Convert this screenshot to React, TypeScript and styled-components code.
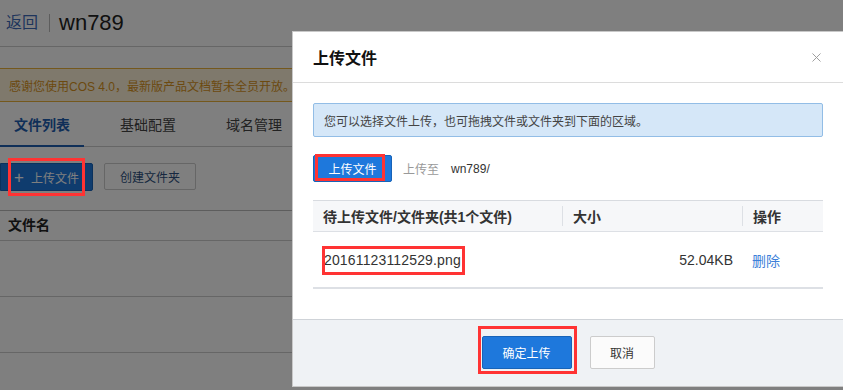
import styled, { createGlobalStyle } from 'styled-components';
import { X } from 'lucide-react';

const GlobalStyle = createGlobalStyle`
  html, body {
    margin: 0;
    padding: 0;
    background: #fff;
    overflow: hidden;
  }
  body {
    font-family: "Liberation Sans", "Noto Sans CJK SC", sans-serif;
    color: #333;
  }
`;

const Page = styled.div`
  width: 843px;
  height: 390px;
  background: #fff;
`;

const Header = styled.div`
  display: flex;
  align-items: center;
  height: 46px;
  padding-left: 6px;
  border-bottom: 1px solid #ccc;
`;

const BackLink = styled.a`
  font-size: 16px;
  color: #3d6ab8;
  line-height: 20px;
`;

const Divider = styled.span`
  width: 1px;
  height: 18px;
  background: #bbb;
  margin: 0 9px 0 11px;
`;

const PageTitle = styled.h1`
  margin: 0;
  font-size: 22px;
  font-weight: 400;
  color: #222;
  line-height: 26px;
`;

const Notice = styled.div`
  margin-top: 21px;
  height: 32px;
  display: flex;
  align-items: center;
  padding-left: 9px;
  font-size: 12px;
  color: #d8931e;
  background: #fff3d8;
  border-top: 1px solid #e8b03a;
  border-bottom: 1px solid #e8b03a;
`;

const Tabs = styled.div`
  display: flex;
  height: 44px;
  border-bottom: 1px solid #ccc;
`;

const Tab = styled.div<{ $active?: boolean }>`
  padding: 0 14px;
  margin-right: 22px;
  display: flex;
  align-items: center;
  font-size: 14px;
  font-weight: ${(p) => (p.$active ? 700 : 400)};
  color: ${(p) => (p.$active ? '#1f5fb0' : '#444')};
  border-bottom: 2px solid ${(p) => (p.$active ? '#1f5fb0' : 'transparent')};
  margin-bottom: -1px;
`;

const Toolbar = styled.div`
  display: flex;
  gap: 11px;
  margin-top: 16px;
`;

const Marked = styled.div`
  position: relative;
  display: inline-flex;
`;

const RedBox = styled.span<{ $t: number; $r: number; $b: number; $l: number }>`
  position: absolute;
  top: ${(p) => p.$t}px;
  right: ${(p) => p.$r}px;
  bottom: ${(p) => p.$b}px;
  left: ${(p) => p.$l}px;
  border: 3px solid #ff3333;
  z-index: 30;
  pointer-events: none;
`;

const PrimaryButton = styled.button`
  display: flex;
  align-items: center;
  justify-content: center;
  gap: 4px;
  height: 28px;
  padding: 0 14px;
  white-space: nowrap;
  font-family: inherit;
  font-size: 12px;
  color: #fff;
  background: #1e78dc;
  border: 1px solid #1763b8;
  border-radius: 2px;
`;

const PageUploadButton = styled(PrimaryButton)`
  width: 93px;
  padding: 0 0 0 13px;
  gap: 7px;
  justify-content: flex-start;
  border-radius: 0 2px 2px 0;
`;

const PlusMark = styled.span`
  font-size: 17px;
  font-weight: 300;
  line-height: 1;
`;

const GhostButton = styled.button`
  height: 27px;
  width: 92px;
  font-family: inherit;
  font-size: 12px;
  color: #2c4f80;
  background: #fff;
  border: 1px solid #ccc;
  border-radius: 2px;
`;

const FileTable = styled.div`
  margin-top: 19px;
  border-top: 1px solid #bbb;
`;

const FileHead = styled.div`
  height: 30px;
  display: flex;
  align-items: center;
  padding: 0 0 3px 8px;
  box-sizing: border-box;
  font-size: 14px;
  font-weight: 700;
  color: #222;
  border-bottom: 1px solid #ccc;
`;

const FileRow = styled.div`
  height: 55px;
  border-bottom: 1px solid #ccc;
`;

const Overlay = styled.div`
  position: fixed;
  inset: 0;
  background: rgba(0, 0, 0, 0.5);
  z-index: 10;
`;

const Modal = styled.div`
  position: fixed;
  left: 292px;
  top: 31px;
  width: 550px;
  border: 1px solid #c8c8c8;
  background: #fff;
  z-index: 20;
  display: flex;
  flex-direction: column;
`;

const ModalHeader = styled.div`
  height: 50px;
  display: flex;
  align-items: center;
  justify-content: space-between;
  padding: 0 20px;
  border-bottom: 1px solid #dcdcdc;
`;

const ModalTitle = styled.h2`
  margin: 0;
  font-size: 16px;
  font-weight: 700;
  color: #111;
`;

const CloseButton = styled.span`
  display: flex;
  color: #999;
  margin-right: -1px;
`;

const ModalBody = styled.div`
  padding: 20px 20px 30px;
`;

const InfoBox = styled.div`
  height: 32px;
  display: flex;
  align-items: center;
  padding-left: 10px;
  font-size: 12px;
  color: #444;
  background: #d5e7f8;
  border: 1px solid #92bde6;
  border-radius: 2px;
`;

const UploadRow = styled.div`
  display: flex;
  align-items: center;
  margin-top: 18px;
  font-size: 12px;
`;

const ModalUploadButton = styled(PrimaryButton)`
  width: 79px;
  height: 27px;
  padding: 0;
`;

const Muted = styled.span`
  color: #999;
  margin-left: 11px;
`;

const Path = styled.span`
  color: #333;
  margin-left: 12px;
`;

const QueueTable = styled.div`
  margin-top: 18px;
  border-top: 1px solid #d8dbe0;
  border-bottom: 2px solid #dde0e5;
`;

const QueueHead = styled.div`
  display: grid;
  grid-template-columns: 249px 180px 1fr;
  height: 30px;
  background: #f6f7f9;
  border-bottom: 1px solid #dde0e5;
`;

const HeadCell = styled.div<{ $sep?: boolean }>`
  display: flex;
  align-items: center;
  padding-left: 10px;
  font-size: 14px;
  font-weight: 700;
  color: #333;
  border-left: ${(p) => (p.$sep ? '1px solid #dde0e5' : 'none')};
  margin: ${(p) => (p.$sep ? '5px 0' : '0')};
`;

const QueueRow = styled.div`
  display: grid;
  grid-template-columns: 249px 180px 1fr;
  height: 55px;
  align-items: center;
`;

const Cell = styled.div<{ $right?: boolean }>`
  font-size: 14px;
  color: #333;
  padding: ${(p) => (p.$right ? '0 9px 0 0' : '0 0 0 10px')};
  text-align: ${(p) => (p.$right ? 'right' : 'left')};
`;

const FileName = styled.span`
  position: relative;
  display: inline-block;
  font-size: 14px;
  letter-spacing: 0.15px;
  color: #333;
  line-height: 20px;
  margin-left: 1px;
`;

const DeleteLink = styled.a`
  color: #3c7fd9;
  font-size: 14px;
`;

const ModalFooter = styled.div`
  height: 64px;
  display: flex;
  justify-content: center;
  align-items: center;
  gap: 18px;
  padding-bottom: 2px;
  background: #eff2f5;
  border-top: 1px solid #cfd3d8;
`;

const ConfirmButton = styled(PrimaryButton)`
  width: 90px;
  height: 33px;
  padding: 0;
`;

const CancelButton = styled.button`
  width: 65px;
  height: 33px;
  font-family: inherit;
  font-size: 12px;
  color: #333;
  background: #fbfbfb;
  border: 1px solid #ccc;
  border-radius: 2px;
`;

export default function App() {
  return (
    <>
      <GlobalStyle />
      <Page>
        <Header>
          <BackLink>返回</BackLink>
          <Divider />
          <PageTitle>wn789</PageTitle>
        </Header>
        <Notice>感谢您使用COS 4.0，最新版产品文档暂未全员开放。</Notice>
        <Tabs>
          <Tab $active>文件列表</Tab>
          <Tab>基础配置</Tab>
          <Tab>域名管理</Tab>
        </Tabs>
        <Toolbar>
          <Marked>
            <PageUploadButton>
              <PlusMark>+</PlusMark>
              <span>上传文件</span>
            </PageUploadButton>
            <RedBox $t={-5} $r={8} $b={-5} $l={8} />
          </Marked>
          <GhostButton>创建文件夹</GhostButton>
        </Toolbar>
        <FileTable>
          <FileHead>文件名</FileHead>
          <FileRow />
          <FileRow />
        </FileTable>
      </Page>

      <Overlay />

      <Modal>
        <ModalHeader>
          <ModalTitle>上传文件</ModalTitle>
          <CloseButton>
            <X size={15} strokeWidth={1.5} />
          </CloseButton>
        </ModalHeader>
        <ModalBody>
          <InfoBox>您可以选择文件上传，也可拖拽文件或文件夹到下面的区域。</InfoBox>
          <UploadRow>
            <Marked>
              <ModalUploadButton>上传文件</ModalUploadButton>
              <RedBox $t={-1} $r={7} $b={1} $l={2} />
            </Marked>
            <Muted>上传至</Muted>
            <Path>wn789/</Path>
          </UploadRow>
          <QueueTable>
            <QueueHead>
              <HeadCell>待上传文件/文件夹(共1个文件)</HeadCell>
              <HeadCell $sep>大小</HeadCell>
              <HeadCell $sep>操作</HeadCell>
            </QueueHead>
            <QueueRow>
              <Cell>
                <FileName>
                  20161123112529.png
                  <RedBox $t={-4} $r={-4} $b={-5} $l={-2} />
                </FileName>
              </Cell>
              <Cell $right>52.04KB</Cell>
              <Cell>
                <DeleteLink>删除</DeleteLink>
              </Cell>
            </QueueRow>
          </QueueTable>
        </ModalBody>
        <ModalFooter>
          <Marked>
            <ConfirmButton>确定上传</ConfirmButton>
            <RedBox $t={-10} $r={-5} $b={-5} $l={-4} />
          </Marked>
          <CancelButton>取消</CancelButton>
        </ModalFooter>
      </Modal>
    </>
  );
}
